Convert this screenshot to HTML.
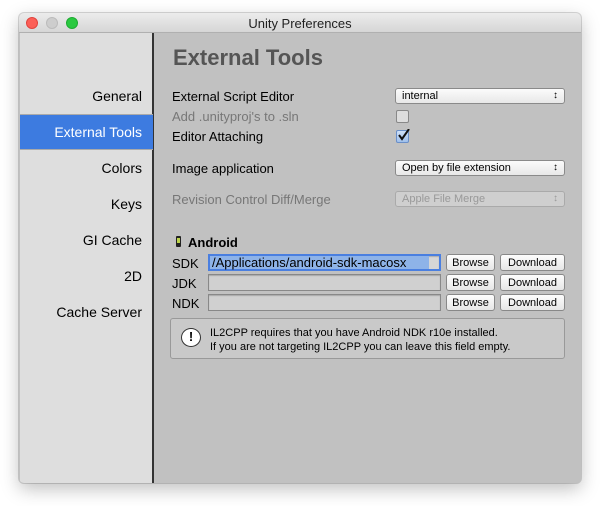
<!DOCTYPE html>
<html><head><meta charset="utf-8"><style>
*{margin:0;padding:0;box-sizing:border-box}
body{width:600px;height:506px;background:#fff;position:relative;overflow:hidden;font-family:"Liberation Sans","DejaVu Sans",sans-serif;color:#000}
.win{position:absolute;left:19px;top:13px;width:562px;height:470px;border-radius:5px;box-shadow:0 6px 18px rgba(0,0,0,.25),0 0 0 1px rgba(0,0,0,.15);overflow:hidden;background:#c1c1c1}
.title{position:absolute;left:0;top:0;width:100%;height:20px;background:linear-gradient(#ececec,#d6d6d6);border-bottom:1px solid #b0b0b0;text-align:center;font-size:13px;line-height:21px;color:#222}
.dot{position:absolute;top:4px;width:12px;height:12px;border-radius:50%}
.side{position:absolute;left:1px;top:20px;width:134px;height:450px;background:#dedede;border-right:2px solid #333}
.si{position:absolute;right:10px;font-size:14px;text-align:right}
.sel{position:absolute;left:0;top:81px;width:133px;height:36px;background:#3d7be0;border-top:1px solid #aaa;border-bottom:1px solid #aaa}
.t{position:absolute;font-size:13px;white-space:nowrap}
.g{color:#777}
.drop{position:absolute;left:395px;width:170px;height:16px;border:1px solid #8a8a8a;border-radius:3px;background:linear-gradient(#fbfbfb,#e8e8e8);font-size:11px;line-height:14px;padding-left:6px}
.drop:after{content:"\2195";position:absolute;right:6px;top:0;font-size:10px}
.drop.d{color:#999;border-color:#aaa;background:#cfcfcf}
.cb{position:absolute;left:396px;width:13px;height:13px;border:1px solid #888;border-radius:2px;background:#ddd}
.fld{position:absolute;left:208px;width:233px;height:17px;border:1px solid #888;background:#d0d0d0;box-shadow:inset 0 1px 1px rgba(0,0,0,.2)}
.btn{position:absolute;height:17px;border:1px solid #888;border-radius:3px;background:linear-gradient(#fdfdfd,#e6e6e6);font-size:11px;line-height:16px;text-align:center}
</style></head><body>
<div class="win">
<div class="title">Unity Preferences
<div class="dot" style="left:7px;background:#fc5f57;border:1px solid #e0443e"></div>
<div class="dot" style="left:27px;background:#cdcdcd;border:1px solid #bbb"></div>
<div class="dot" style="left:47px;background:#2ac940;border:1px solid #1eab32"></div>
</div>
<div class="side">
<div class="sel"></div>
<div class="si" style="top:55px">General</div>
<div class="si" style="top:91px;color:#fff">External Tools</div>
<div class="si" style="top:127px">Colors</div>
<div class="si" style="top:163px">Keys</div>
<div class="si" style="top:199px">GI Cache</div>
<div class="si" style="top:235px">2D</div>
<div class="si" style="top:271px">Cache Server</div>
</div>
</div>
<div class="t" style="left:173px;top:45px;font-size:22px;font-weight:bold;color:#555">External Tools</div>
<div class="t" style="left:172px;top:89px">External Script Editor</div>
<div class="t g" style="left:172px;top:109px">Add .unityproj's to .sln</div>
<div class="t" style="left:172px;top:129px">Editor Attaching</div>
<div class="t" style="left:172px;top:161px">Image application</div>
<div class="t g" style="left:172px;top:192px">Revision Control Diff/Merge</div>
<div class="drop" style="top:88px">internal</div>
<div class="cb" style="top:110px"></div>
<div class="cb" style="top:130px;background:linear-gradient(#cfe0f8,#9fc0ec);border-color:#6a8fc8"><svg width="13" height="13" viewBox="0 0 13 13" style="position:absolute;left:0;top:-2px"><path d="M2 6 L5 10 L12 0" stroke="#111" stroke-width="2" fill="none"/></svg></div>
<div class="drop" style="top:160px">Open by file extension</div>
<div class="drop d" style="top:191px">Apple File Merge</div>
<div style="position:absolute;left:176px;top:236px;width:5px;height:11px;background:#222;border-radius:1px"><div style="margin:2px 1px;width:3px;height:5px;background:#bcd34a"></div></div>
<div class="t" style="left:188px;top:235px;font-weight:bold">Android</div>
<div class="t" style="left:172px;top:256px">SDK</div>
<div class="t" style="left:172px;top:276px">JDK</div>
<div class="t" style="left:172px;top:296px">NDK</div>
<div class="fld" style="top:254px;border:2px solid #4a7fe0;background:#d6d6d6"><div style="position:absolute;left:0;top:0;height:13px;width:219px;background:#8eb3e8;font-size:13px;line-height:13px;padding-left:2px">/Applications/android-sdk-macosx</div></div>
<div class="fld" style="top:274px"></div>
<div class="fld" style="top:294px"></div>
<div class="btn" style="left:446px;top:254px;width:49px">Browse</div>
<div class="btn" style="left:500px;top:254px;width:65px">Download</div>
<div class="btn" style="left:446px;top:274px;width:49px">Browse</div>
<div class="btn" style="left:500px;top:274px;width:65px">Download</div>
<div class="btn" style="left:446px;top:294px;width:49px">Browse</div>
<div class="btn" style="left:500px;top:294px;width:65px">Download</div>
<div style="position:absolute;left:170px;top:318px;width:395px;height:41px;border:1px solid #999;border-radius:3px;background:#c9c9c9"></div>
<div style="position:absolute;left:181px;top:328px;width:20px;height:19px;border:1.5px solid #333;border-radius:50%;background:#fff;text-align:center;font-weight:bold;font-size:13px;line-height:16px">!</div>
<div class="t" style="left:210px;top:326px;font-size:11px;line-height:14px">IL2CPP requires that you have Android NDK r10e installed.<br>If you are not targeting IL2CPP you can leave this field empty.</div>
</body></html>
